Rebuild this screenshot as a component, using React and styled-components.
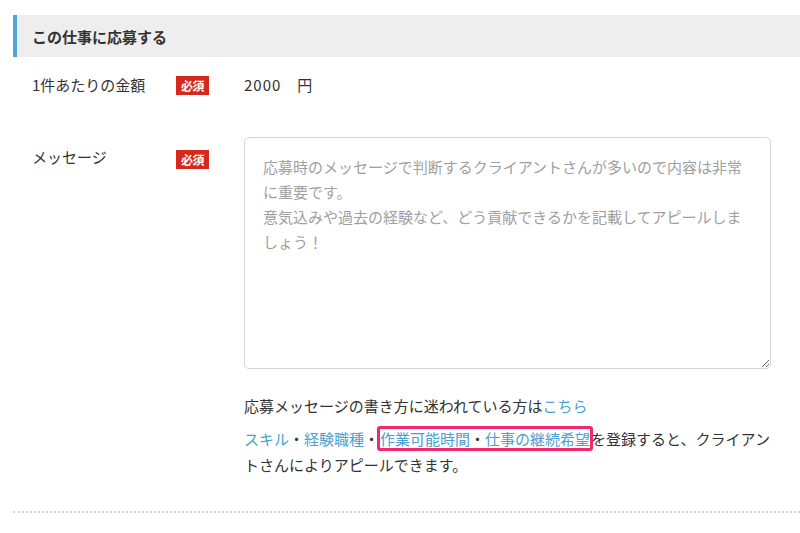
import React from "react";
import styled, { createGlobalStyle } from "styled-components";

const placeholder =
  "応募時のメッセージで判断するクライアントさんが多いので内容は非常に重要です。\n意気込みや過去の経験など、どう貢献できるかを記載してアピールしましょう！";

const GlobalStyle = createGlobalStyle`
  html, body {
    margin: 0;
    padding: 0;
    background: #fff;
  }
  body {
    font-family: "Noto Sans CJK JP", "Noto Sans", sans-serif;
    color: #333;
  }
`;

export default function App() {
  return (
    <>
      <GlobalStyle />
      <Section>
        <Heading>この仕事に応募する</Heading>

        <Row top={17}>
          <Label>1件あたりの金額</Label>
          <BadgeCell offset={2}>
            <Badge>必須</Badge>
          </BadgeCell>
          <Value>2000　円</Value>
        </Row>

        <Row top={42}>
          <Label offset={9}>メッセージ</Label>
          <BadgeCell offset={13}>
            <Badge>必須</Badge>
          </BadgeCell>
          <Field>
            <MessageBox placeholder={placeholder} />
            <HelpText top={24}>
              応募メッセージの書き方に迷われている方は<Link href="#">こちら</Link>
            </HelpText>
            <HelpText top={7}>
              <Link href="#">スキル</Link>・<Link href="#">経験職種</Link>・
              <Marked>
                <Link href="#">作業可能時間</Link>・<Link href="#">仕事の継続希望</Link>
              </Marked>
              を登録すると、クライアントさんによりアピールできます。
            </HelpText>
          </Field>
        </Row>

        <Divider />
      </Section>
    </>
  );
}

const Section = styled.div`
  padding: 15px 0 0 13px;
`;

const Heading = styled.h2`
  margin: 0;
  height: 42px;
  box-sizing: border-box;
  display: flex;
  align-items: center;
  padding-left: 15px;
  border-left: 4px solid #4fa7d3;
  background: #eeeeee;
  font-size: 15px;
  font-weight: 700;
  color: #333;
`;

const Row = styled.div`
  display: grid;
  grid-template-columns: 144px 68px 528px;
  align-items: start;
  margin-top: ${(p) => p.top}px;
  padding-left: 19px;
`;

const Label = styled.div`
  padding-top: ${(p) => p.offset || 0}px;
  font-size: 15px;
  line-height: 21px;
  color: #333;
`;

const BadgeCell = styled.div`
  display: flex;
  padding-top: ${(p) => p.offset || 0}px;
`;

const Badge = styled.span`
  display: flex;
  align-items: center;
  justify-content: center;
  width: 33px;
  height: 19px;
  background: #d7281e;
  color: #fff;
  font-size: 12px;
  font-weight: 700;
  letter-spacing: -0.5px;
`;

const Value = styled.div`
  font-size: 15px;
  line-height: 21px;
  letter-spacing: 1px;
  color: #333;
`;

const Field = styled.div`
  display: flex;
  flex-direction: column;
`;

const MessageBox = styled.textarea`
  width: 527px;
  height: 232px;
  box-sizing: border-box;
  padding: 16px 18px;
  border: 1px solid #d4d4d4;
  border-radius: 5px;
  font-family: "Noto Sans CJK JP", "Noto Sans", sans-serif;
  font-size: 15px;
  line-height: 25px;
  color: #333;
  outline: none;

  &::placeholder {
    color: #a0a0a0;
  }
`;

const HelpText = styled.p`
  margin: ${(p) => p.top}px 0 0;
  font-size: 15px;
  line-height: 26px;
  color: #333;
`;

const Link = styled.a`
  color: #4a9fcf;
  text-decoration: none;
`;

const Marked = styled.span`
  outline: 3px solid #f2296f;
  outline-offset: -1px;
  border-radius: 1px;
  padding: 0 1px;
`;

const Divider = styled.hr`
  margin: 33px 0 0;
  border: none;
  border-top: 2px dotted #d6d6d6;
`;
